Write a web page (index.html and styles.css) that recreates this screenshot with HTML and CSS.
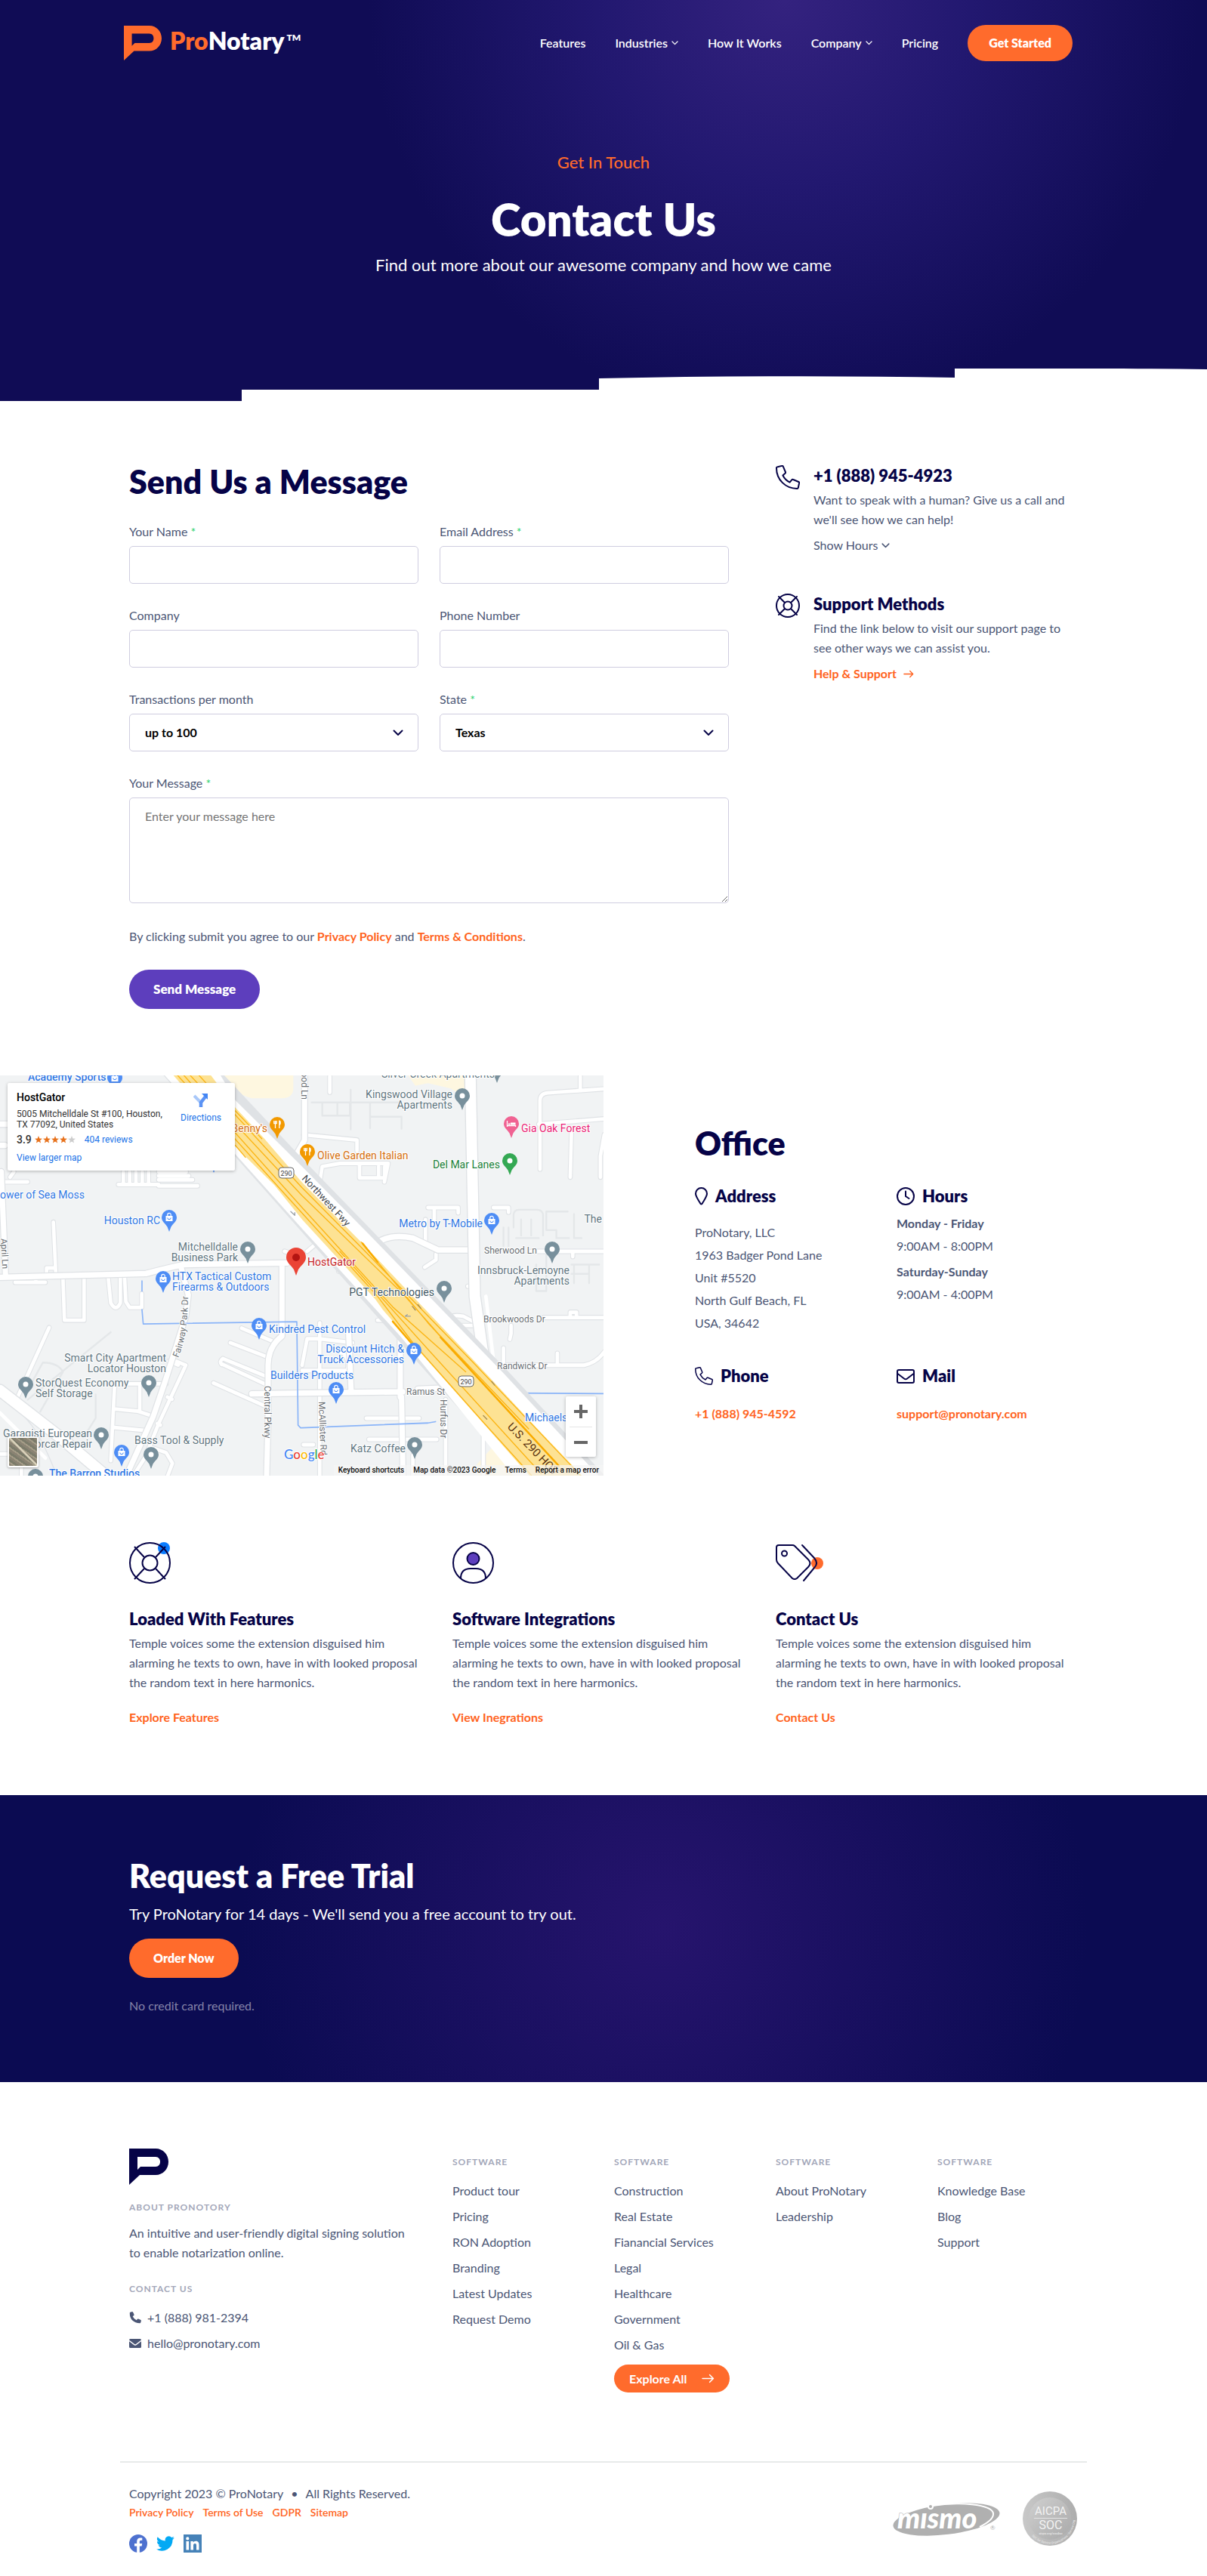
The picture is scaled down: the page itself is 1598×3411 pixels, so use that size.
FILE: index.html
```html
<!DOCTYPE html>
<html lang="en">
<head>
<meta charset="utf-8">
<meta name="viewport" content="width=device-width, initial-scale=1">
<title>Contact Us – ProNotary</title>
<link rel="stylesheet" href="styles.css">
</head>
<body>
<svg class="sprite" aria-hidden="true">
  <symbol id="mark" viewBox="0 0 52 48"><path fill-rule="evenodd" d="M0 0H35C45 0 52 8 52 17.500S45 35 35 35H14L0 48ZM11 11V28L15 24H35C39 24 41 21 41 17.500S39 11 35 11Z"/></symbol>
  <symbol id="chevron" viewBox="0 0 14 9"><path d="M1.500 1.500 7 7l5.500-5.500" fill="none" stroke="currentColor" stroke-width="2" stroke-linecap="round" stroke-linejoin="round"/></symbol>
  <symbol id="arrow" viewBox="0 0 16 12"><path d="M1 6h13.500M10 1.500 14.500 6 10 10.500" fill="none" stroke="currentColor" stroke-width="1.500" stroke-linecap="round" stroke-linejoin="round"/></symbol>
  <symbol id="phone" viewBox="0 0 32 32"><path d="M2.500 2.200 8.200.9a1.500 1.500 0 0 1 1.700.9l3 7.200a1.500 1.500 0 0 1-.4 1.700L9.400 13.500a21 21 0 0 0 9.200 9.200l2.700-3.300a1.500 1.500 0 0 1 1.800-.4l7.100 3a1.500 1.500 0 0 1 .9 1.700l-1.300 6a1.500 1.500 0 0 1-1.500 1.200C13 31 1 19 1 3.900a1.500 1.500 0 0 1 1.500-1.700z" fill="none" stroke="currentColor" stroke-width="2" stroke-linejoin="round"/></symbol>
  <symbol id="ring" viewBox="0 0 32 32"><g fill="none" stroke="currentColor" stroke-width="2" stroke-linecap="round"><circle cx="16" cy="16" r="15"/><circle cx="16" cy="16" r="5.500"/><path d="M4 4l8 8M28 4l-8 8M4 28l8-8M28 28l-8-8"/></g></symbol>
  <defs>
    <path id="pin" d="M10 0a10 10 0 0 1 10 10c0 5.500-5 8-7.500 12.500L10 29l-2.500-6.500C5 18 0 15.500 0 10A10 10 0 0 1 10 0Z"/>
    <g id="pin-dot"><use href="#pin"/><circle cx="10" cy="10" r="3.500" fill="#fff"/></g>
    <g id="pin-bag"><use href="#pin"/><path fill="#fff" d="M5.500 8h9v7h-9z"/><path d="M7.800 8V6.500a2.200 2.200 0 0 1 4.400 0V8" fill="none" stroke="#fff" stroke-width="1.200"/><path d="M7.800 10.500a2.200 2.200 0 0 0 4.400 0" fill="none" stroke="#4285f4"/></g>
    <g id="pin-food"><use href="#pin"/><path d="M7.500 5v10M5.800 5v3.500h3.400V5M12.800 15V5.200c1.800 0 1.800 5 0 5" fill="none" stroke="#fff" stroke-width="1.300"/></g>
    <g id="pin-bed"><use href="#pin"/><path d="M4.500 6v8M4.500 12.500h11V14" fill="none" stroke="#fff" stroke-width="1.300"/><path fill="#fff" d="M6 9.500h2.500v2H6zM9 8.500h6.500v3H9z"/></g>
  </defs>
</svg>

<section class="hero">
  <header class="header">
    <a class="brand" href="#">
      <svg class="brand-mark" aria-hidden="true"><use href="#mark"/></svg>
      <span class="brand-name"><span class="brand-pro">Pro</span>Notary<span class="brand-tm">TM</span></span>
    </a>
    <nav class="nav" aria-label="Main">
      <a href="#">Features</a>
      <a href="#">Industries <svg class="nav-chevron"><use href="#chevron"/></svg></a>
      <a href="#">How It Works</a>
      <a href="#">Company <svg class="nav-chevron"><use href="#chevron"/></svg></a>
      <a href="#">Pricing</a>
      <a class="btn btn-nav" href="#">Get Started</a>
    </nav>
  </header>
  <div class="hero-text">
    <p class="eyebrow">Get In Touch</p>
    <h1>Contact Us</h1>
    <p class="lead">Find out more about our awesome company and how we came</p>
  </div>
  <svg class="steps" viewBox="0 0 1598 43" preserveAspectRatio="none" aria-hidden="true"><path fill="#fff" d="M320 43V28H793V13Q1040 8 1264 12V0Q1430-1 1598 1V43Z"/></svg>
</section>

<main>
  <section class="container contact">
    <form class="contact-form">
      <h2>Send Us a Message</h2>
      <div class="fields">
        <div class="field"><label for="name">Your Name <span class="req">*</span></label><input id="name" type="text"></div>
        <div class="field"><label for="email">Email Address <span class="req">*</span></label><input id="email" type="email"></div>
        <div class="field"><label for="company">Company</label><input id="company" type="text"></div>
        <div class="field"><label for="phone-number">Phone Number</label><input id="phone-number" type="tel"></div>
        <div class="field"><label for="volume">Transactions per month</label>
          <div class="select"><select id="volume"><option>up to 100</option></select><svg><use href="#chevron"/></svg></div></div>
        <div class="field"><label for="state">State <span class="req">*</span></label>
          <div class="select"><select id="state"><option>Texas</option></select><svg><use href="#chevron"/></svg></div></div>
        <div class="field field-wide"><label for="message">Your Message <span class="req">*</span></label><textarea id="message" placeholder="Enter your message here"></textarea></div>
      </div>
      <p class="agree">By clicking submit you agree to our <a href="#">Privacy Policy</a> and <a href="#">Terms &amp; Conditions</a>.</p>
      <button class="btn btn-purple" type="button">Send Message</button>
    </form>
    <aside class="aside">
      <div class="info">
        <svg class="info-icon"><use href="#phone"/></svg>
        <div>
          <h3>+1 (888) 945-4923</h3>
          <p>Want to speak with a human? Give us a call and we'll see how we can help!</p>
          <button class="show-hours" type="button">Show Hours <svg><use href="#chevron"/></svg></button>
        </div>
      </div>
      <div class="info">
        <svg class="info-icon"><use href="#ring"/></svg>
        <div>
          <h3>Support Methods</h3>
          <p>Find the link below to visit our support page to see other ways we can assist you.</p>
          <a class="help" href="#">Help &amp; Support <svg><use href="#arrow"/></svg></a>
        </div>
      </div>
    </aside>
  </section>

  <section class="location">
    <div class="map">
      <svg class="map-canvas" viewBox="0 0 799 530" preserveAspectRatio="xMidYMid slice" role="img" aria-label="Map">
        <rect width="799" height="530" fill="#f1f3f4"/>
        <g transform="scale(.3333 .3508) translate(0 -26)" fill="none" stroke-linejoin="round" stroke-linecap="round">
          <path fill="#fef7e0" d="M860 0H1165V80Q1160 112 1120 112H1000Q950 100 870 45ZM1620 0h230v110l-60-35-90-20-50 10-30-40ZM1970 1415l120 60 90 80h-280l-6-60Z"/>
          <g stroke="#e4e7e9" stroke-width="7">
            <path d="M1238 128h355M1280 130v48h110v-48M1340 130v48M1393 80v150M1470 130v95M1470 182h125v45M2040 600V555q0-22 22-22h70q25 0 25 22v75M2050 640h90M2070 570v60M2110 570v60M2170 540h85M2170 540v70h40v30h50M2280 550v90h30M2000 600v70M2020 600v70M2280 740v70M2340 740v70M2270 740h110M2270 775h70M100 1230l70-120q60 0 80 35l-90 150M110 1250l330-255M380 1230v90l-40 60M2130 740v100h40V700"/>
          </g>
          <path stroke="#e0e3e7" stroke-width="4" d="M0 1235q120 80 170 180t60 140"/>
          <g stroke="#dfe2e5" stroke-width="20">
            <path id="minor" d="M212 580l10 200M185 775v-22h30M250 790l6 160h78V790M430 790l10 95q20 35 38 0V790M495 790l5 90 15 22h48V850M60 807h120M142 795v12M195 978L70 1240M0 428h110M40 410l15-20M470 438h160M490 390v45M515 390v40M540 390v40M565 390v40M590 390v40M630 390l110 0M630 405h120M630 420h135M630 443h155M455 1200l-15 280M460 1190h200M555 1200v90M455 1285l90 8 65 20M455 1355l130 12M700 1105l38 15-110 225-50 120-40 60M670 1105l38 14M665 1240l18 8M625 1340l12 6M600 1430l60 20 25 40-20 50M85 1450v90M0 1455h30M960 980l125 50M915 1035l150 55M885 1095l180 70M880 1115l170 75M885 1095q-15 10-5 22M848 1187l200 85M1310 30v60M1206 250l212 20v40M1270 430l10-60 70-12h192l-15 70M1428 365v48h100V370M1504 370v42M1690 570v90M1785 525h-60v45M1700 525h120v20M1732 700v22l-45 28M1960 525h60v18M2145 380V120q0-25 30-28l220-15M2305 30v45M2140 210l260-20M2270 240l-5 170M2400 250l-15 80v80M2110 690h290M2275 690v20M1868 822h-10M1760 960q20-35 80-25l40 20M1800 970h80M2160 940h240M2265 940v-20h25v20M2030 970v30l-5 22M2000 1055v70M2214 1075v40M1950 1120h370q50-10 80-50M1200 1120l20-100h50l130 15M1270 960v580M1200 1140h180q10-60-30-70M1455 1320h210M1465 1400h270M1640 1460v80M1770 1250v290M1130 690l60 20M1220 690l50-40M1345 765l15-20M1520 950l-20 0M2020 1195l-35 25M1920 1370v170M1205 1420h40"/>
          </g>
          <use href="#minor" stroke="#fff" stroke-width="14"/>
          <g stroke="#dfe2e5" stroke-width="28">
            <path id="mid" d="M0 788l580-14q80-20 150-34l410-6M5 390L22 780M718 745l30 110-10 80-80 240-50 140-110 230M1120 740v270q-55 40-55 110v200l-6 220M1210 0v270l-30 50-20 20M1590 1000v240M1595 1240l6 300M1000 1228l600-8M1480 670q60-50 160-30l100 45h130M1660 1210l130-5M1385 1000l10 220M0 290h20M0 210h30"/>
          </g>
          <use href="#mid" stroke="#fff" stroke-width="21"/>
          <path stroke="#dfe2e5" stroke-width="50" d="M1868 0l18 860 30 200 30 130M0 1215l230 170 200 160"/>
          <path stroke="#fff" stroke-width="42" d="M1868 0l18 860 30 200 30 130M0 1215l230 170 200 160"/>
          <path stroke="#fff" stroke-width="14" d="M0 1300l180 170M1930 860l30 240"/>
          <path stroke="#8ab4f8" stroke-width="5" d="M564 802v38M564 910l5 54 610-8 5 390 10 10h20M2030 1225l370 2M1200 1356l500-18 30-5"/>
          <path stroke="#dfe2e5" stroke-width="36" d="M650 0 1200 592 2050 1500M850 10 1200 365 1460 620 2000 1150 2400 1560"/>
          <path fill="#fff" d="M630 0 860 0 935 120 1200 370 1460 620 2000 1150 2400 1560H2060L1590 1010 1200 605Z"/>
          <path fill="#fde293" d="M680 16 830 16 935 148 1050 265 1200 430 1440 660 1880 1100 2130 1355 2320 1545H2110L1930 1350 1640 1040 1520 910 1490 870 1200 570 1090 440 930 290Z"/>
          <path stroke="#fbb515" stroke-width="4" d="M700 20 1080 420 1500 860 1640 1035 1920 1335 2115 1540M725 20 1200 525 1560 900 1850 1145M750 20 1200 480 1600 850 1740 1000 2100 1360M785 20 1200 450 1430 670 1880 1110 2310 1540M1435 655 1700 960 2220 1500M1350 690 1700 1060 2150 1530M935 160 1040 265M935 290 975 335"/>
          <path stroke="#f9ab00" stroke-width="7" d="M1750 1015 2220 1500M1440 660l60 70M1560 955l100 110"/>
          <path stroke="#a58c55" stroke-width="4" d="M1650 912l-12-14M1672 905l-12-14M1965 1195l-12-14M1920 1310l14 14"/>
          <path stroke="#9aa0a6" stroke-width="4" d="M1630 935h-20l8-6M1155 540l16 14v-10"/>
        </g>
        <g>
          <use href="#pin-bag" class="p-blue" x="142" y="-7"/><use href="#pin-bag" class="p-blue" x="273" y="100"/><use href="#pin-bag" class="p-blue" x="214" y="178"/><use href="#pin-bag" class="p-blue" x="206" y="259"/><use href="#pin-bag" class="p-blue" x="333" y="321"/><use href="#pin-bag" class="p-blue" x="151" y="489"/><use href="#pin-bag" class="p-blue" x="641" y="182"/><use href="#pin-bag" class="p-blue" x="538" y="354"/><use href="#pin-bag" class="p-blue" x="435" y="406"/>
          <use href="#pin-dot" class="p-gray" x="318" y="220"/><use href="#pin-dot" class="p-gray" x="187" y="397"/><use href="#pin-dot" class="p-gray" x="24" y="399"/><use href="#pin-dot" class="p-gray" x="124" y="466"/><use href="#pin-dot" class="p-gray" x="190" y="492"/><use href="#pin-dot" class="p-gray" x="37" y="521"/><use href="#pin-dot" class="p-gray" x="602" y="17"/><use href="#pin-dot" class="p-gray" x="648" y="-19"/><use href="#pin-dot" class="p-gray" x="721" y="220"/><use href="#pin-dot" class="p-gray" x="578" y="272"/><use href="#pin-dot" class="p-gray" x="539" y="479"/>
          <use href="#pin-food" class="p-orange" x="357" y="55"/><use href="#pin-food" class="p-orange" x="397" y="91"/><use href="#pin-bed" class="p-pink" x="667" y="54"/><use href="#pin-dot" class="p-green" x="665" y="103"/>
          <path class="p-red" d="M392 228a13 13 0 0 1 13 13c0 7-6.500 10-10 16L392 265l-3-8c-3.500-6-10-9-10-16a13 13 0 0 1 13-13Z"/><circle cx="392" cy="241" r="5" fill="#b31412"/>
        </g>
        <g class="shield"><rect x="369" y="122" width="20" height="14" rx="4"/><text x="379" y="133">290</text><rect x="607" y="398" width="20" height="14" rx="4"/><text x="617" y="409">290</text></g>
        <g class="t-blue">
          <text x="37" y="7" class="t-bold">Academy Sports</text><text x="0" y="163">ower of Sea Moss</text><text x="212" y="197" class="end">Houston RC</text>
          <text x="228" y="271">HTX Tactical Custom</text><text x="228" y="285">Firearms &amp; Outdoors</text><text x="356" y="341">Kindred Pest Control</text>
          <text x="535" y="367" class="end">Discount Hitch &amp;</text><text x="535" y="381" class="end">Truck Accessories</text><text x="358" y="402">Builders Products</text>
          <text x="639" y="201" class="end">Metro by T-Mobile</text><text x="695" y="458">Michaels</text><text x="65" y="532" class="t-bold">The Barron Studios</text>
        </g>
        <g class="t-gray">
          <text x="315" y="232" class="end">Mitchelldalle</text><text x="315" y="246" class="end">Business Park</text><text x="220" y="379" class="end">Smart City Apartment</text><text x="220" y="393" class="end">Locator Houston</text>
          <text x="47" y="412">StorQuest Economy</text><text x="47" y="426">Self Storage</text><text x="122" y="479" class="end">Garagisti European</text><text x="122" y="493" class="end">Motorcar Repair</text><text x="178" y="488">Bass Tool &amp; Supply</text>
          <text x="655" y="3" class="end">Silver Creek Apartments</text><text x="599" y="30" class="end">Kingswood Village</text><text x="599" y="44" class="end">Apartments</text><text x="754" y="263" class="end">Innsbruck-Lemoyne</text><text x="754" y="277" class="end">Apartments</text>
          <text x="575" y="292" class="end t-dark">PGT Technologies</text><text x="537" y="499" class="end">Katz Coffee</text><text x="797" y="195" class="end">The</text>
        </g>
        <text x="354" y="75" class="end t-orange">Benny's</text><text x="420" y="111" class="t-orange">Olive Garden Italian</text>
        <text x="690" y="75" class="t-pink">Gia Oak Forest</text><text x="662" y="123" class="end t-green">Del Mar Lanes</text><text x="407" y="252" class="t-red">HostGator</text>
        <g class="t-road">
          <text x="641" y="236">Sherwood Ln</text><text x="640" y="327">Brookwoods Dr</text><text x="658" y="389">Randwick Dr</text><text x="538" y="423">Ramus St</text>
          <text transform="translate(1 216) rotate(87)">April Ln</text><text transform="translate(350 411) rotate(90)">Central Pkwy</text><text transform="translate(422 432) rotate(88)">McAllister Rd</text><text transform="translate(583 429) rotate(90)">Hurfus Dr</text><text transform="translate(399 -15) rotate(90)">Wood Ln</text>
          <text transform="translate(399 137) rotate(47)" class="t-fwy">Northwest Fwy</text>
          <path id="fairway" d="M236 374Q249 345 249 290" fill="none" stroke="none"/><text><textPath href="#fairway">Fairway Park Dr</textPath></text>
        </g>
        <text transform="translate(671 466) rotate(46)" class="t-hov">U.S. 290 HOV</text>
        <text x="376" y="508" class="t-google"><tspan fill="#4285f4">G</tspan><tspan fill="#ea4335">o</tspan><tspan fill="#fbbc04">o</tspan><tspan fill="#4285f4">g</tspan><tspan fill="#34a853">l</tspan><tspan fill="#ea4335">e</tspan></text>
      </svg>
      <div class="place">
        <div class="place-main">
          <strong class="place-name">HostGator</strong>
          <p class="place-address">5005 Mitchelldale St #100, Houston, TX 77092, United States</p>
          <p class="place-rating"><b>3.9</b>
            <svg class="stars" viewBox="0 0 54 10" aria-label="3.9 stars"><defs><path id="star" d="M5 0l1.300 3.600L10 3.700 7.100 6 8.100 9.600 5 7.500 1.900 9.600 2.900 6 0 3.700l3.700-.1z"/></defs><g fill="#e7711b"><use href="#star"/><use href="#star" x="11"/><use href="#star" x="22"/><use href="#star" x="33"/></g><use href="#star" x="44" fill="#ccc"/></svg>
            <a href="#">404 reviews</a></p>
          <a href="#">View larger map</a>
        </div>
        <a class="directions" href="#"><svg viewBox="0 0 20 19"><path d="M1 4l8 8" stroke="#a9c8f9" stroke-width="4" fill="none"/><path d="M10 19v-6l6-8" stroke="#5b93f5" stroke-width="4.500" fill="none"/><path d="M11 1h8v8z" fill="#4285f4"/></svg>Directions</a>
      </div>
      <div class="satellite" aria-hidden="true"></div>
      <div class="zoom"><button type="button" aria-label="Zoom in"><svg viewBox="0 0 18 18"><path d="M9 0v18M0 9h18" stroke="#666" stroke-width="4"/></svg></button><button type="button" aria-label="Zoom out"><svg viewBox="0 0 18 18"><path d="M0 9h18" stroke="#666" stroke-width="4"/></svg></button></div>
      <div class="map-bar"><a href="#">Keyboard shortcuts</a><span>Map data ©2023 Google</span><a href="#">Terms</a><a href="#">Report a map error</a></div>
    </div>
    <div class="office">
      <h2>Office</h2>
      <div class="office-grid">
        <div>
          <h3><svg class="i-pin" viewBox="0 0 17 24"><path d="M8.500 1C4.300 1 1 4.300 1 8.500c0 4 4 9 6.700 13.700a1 1 0 0 0 1.600 0C12 17.500 16 12.500 16 8.500 16 4.300 12.700 1 8.500 1Z" fill="none" stroke="currentColor" stroke-width="2"/></svg>Address</h3>
          <address>ProNotary, LLC<br>1963 Badger Pond Lane<br>Unit #5520<br>North Gulf Beach, FL<br>USA, 34642</address>
        </div>
        <div>
          <h3><svg class="i-24" viewBox="0 0 24 24"><g fill="none" stroke="currentColor" stroke-width="2" stroke-linecap="round"><circle cx="12" cy="12" r="11"/><path d="M12 5.500V12l4.500 3"/></g></svg>Hours</h3>
          <dl><dt>Monday - Friday</dt><dd>9:00AM - 8:00PM</dd><dt>Saturday-Sunday</dt><dd>9:00AM - 4:00PM</dd></dl>
        </div>
        <div>
          <h3><svg class="i-24" viewBox="0 0 32 32"><use href="#phone" class="heavy"/></svg>Phone</h3>
          <a class="office-link" href="#">+1 (888) 945-4592</a>
        </div>
        <div>
          <h3><svg class="i-24" viewBox="0 0 24 24"><g fill="none" stroke="currentColor" stroke-width="2" stroke-linejoin="round"><rect x="1" y="4" width="22" height="17" rx="2"/><path d="M1.500 9 10 15.500q2 1.500 4 0L22.500 9"/></g></svg>Mail</h3>
          <a class="office-link" href="#">support@pronotary.com</a>
        </div>
      </div>
    </div>
  </section>

  <section class="container features">
    <article class="feature">
      <svg class="feature-icon" viewBox="0 0 64 55"><circle cx="46" cy="8" r="8" fill="#0a7cff"/><g fill="none" stroke="#060347" stroke-width="2"><circle cx="27.500" cy="27.500" r="26.500"/><circle cx="27.500" cy="27.500" r="10"/><path d="M7 6l13 14M48 6 35 20M7 49l13-14M48 49 35 35"/></g></svg>
      <h3>Loaded With Features</h3>
      <p>Temple voices some the extension disguised him alarming he texts to own, have in with looked proposal the random text in here harmonics.</p>
      <a href="#">Explore Features</a>
    </article>
    <article class="feature">
      <svg class="feature-icon" viewBox="0 0 64 55"><g fill="none" stroke="#060347" stroke-width="2"><circle cx="27.500" cy="27.500" r="26.500"/><circle cx="27.500" cy="22" r="8" fill="#5d3ebd"/><path d="M11 48q0-13 13-13h7q13 0 13 13"/></g></svg>
      <h3>Software Integrations</h3>
      <p>Temple voices some the extension disguised him alarming he texts to own, have in with looked proposal the random text in here harmonics.</p>
      <a href="#">View Inegrations</a>
    </article>
    <article class="feature">
      <svg class="feature-icon" viewBox="0 0 64 55"><circle cx="55" cy="28" r="8" fill="#ff6b2c"/><g fill="none" stroke="#060347" stroke-width="2" stroke-linecap="round"><path d="M4 4H22q2 0 3 1L43 23q5 5 0 10L28 48q-3 2-6 0L3 28q-2-2-2-5V7q0-3 3-3Z"/><circle cx="11.500" cy="15" r="3.500"/><path d="M35 4 51 21q6 7 0 13L37 51"/></g></svg>
      <h3>Contact Us</h3>
      <p>Temple voices some the extension disguised him alarming he texts to own, have in with looked proposal the random text in here harmonics.</p>
      <a href="#">Contact Us</a>
    </article>
  </section>

  <section class="cta">
    <div class="container">
      <h2>Request a Free Trial</h2>
      <p class="cta-lead">Try ProNotary for 14 days - We'll send you a free account to try out.</p>
      <a class="btn btn-orange" href="#">Order Now</a>
      <p class="cta-note">No credit card required.</p>
    </div>
  </section>
</main>

<footer class="footer">
  <div class="container footer-cols">
    <div class="footer-about">
      <svg class="footer-mark" aria-label="ProNotary"><use href="#mark"/></svg>
      <h4>About Pronotory</h4>
      <p>An intuitive and user-friendly digital signing solution to enable notarization online.</p>
      <h4>Contact Us</h4>
      <ul>
        <li><a href="#"><svg viewBox="0 0 16 16"><path d="M1.500.8 4 .1q.7-.1 1 .5l1.500 3.200q.3.700-.3 1.200L4.700 6.300q1.500 3.500 5 5l1.300-1.500q.5-.6 1.200-.3l3.200 1.500q.6.300.5 1l-.7 2.500q-.2.700-1 .7Q8 15 4.300 11.500T.8 1.800q0-.8.7-1Z"/></svg>+1 (888) 981-2394</a></li>
        <li><a href="#"><svg viewBox="0 0 16 16"><path d="M1.500 2h13q1.500 0 1.500 1.500L8.800 9q-.8.500-1.600 0L0 3.500Q0 2 1.500 2ZM0 5.200 6.500 10.200q1.500 1 3 0L16 5.200V12.500q0 1.500-1.500 1.500h-13Q0 14 0 12.500Z"/></svg>hello@pronotary.com</a></li>
      </ul>
    </div>
    <nav class="footer-nav" aria-label="Product"><h4>Software</h4><ul><li><a href="#">Product tour</a></li><li><a href="#">Pricing</a></li><li><a href="#">RON Adoption</a></li><li><a href="#">Branding</a></li><li><a href="#">Latest Updates</a></li><li><a href="#">Request Demo</a></li></ul></nav>
    <nav class="footer-nav" aria-label="Industries"><h4>Software</h4><ul><li><a href="#">Construction</a></li><li><a href="#">Real Estate</a></li><li><a href="#">Fianancial Services</a></li><li><a href="#">Legal</a></li><li><a href="#">Healthcare</a></li><li><a href="#">Government</a></li><li><a href="#">Oil &amp; Gas</a></li></ul><a class="btn explore" href="#">Explore All <svg><use href="#arrow"/></svg></a></nav>
    <nav class="footer-nav" aria-label="Company"><h4>Software</h4><ul><li><a href="#">About ProNotary</a></li><li><a href="#">Leadership</a></li></ul></nav>
    <nav class="footer-nav" aria-label="Resources"><h4>Software</h4><ul><li><a href="#">Knowledge Base</a></li><li><a href="#">Blog</a></li><li><a href="#">Support</a></li></ul></nav>
  </div>
  <div class="legal">
    <div>
      <p class="copyright"><span>Copyright 2023 © ProNotary</span><span>•</span><span>All Rights Reserved.</span></p>
      <p class="legal-links"><a href="#">Privacy Policy</a><a href="#">Terms of Use</a><a href="#">GDPR</a><a href="#">Sitemap</a></p>
      <div class="social">
        <a href="#" aria-label="Facebook"><svg viewBox="0 0 24 24"><circle cx="12" cy="12" r="12" fill="#4e71cf"/><path fill="#fff" d="M10.200 24v-8.500H7V12h3.200V9.300c0-3 1.800-4.700 4.600-4.700 1.300 0 2.500.2 2.500.2v3h-1.500c-1.500 0-2 .9-2 1.900V12h3.400l-.6 3.500h-2.800V24z"/></svg></a>
        <a href="#" aria-label="Twitter"><svg viewBox="0 0 24 24"><path fill="#03a9f4" d="M24 4.600a10 10 0 0 1-2.800.8 5 5 0 0 0 2.100-2.700 10 10 0 0 1-3.100 1.200 4.900 4.900 0 0 0-8.400 4.500A14 14 0 0 1 1.700 3.200a4.900 4.900 0 0 0 1.500 6.500 5 5 0 0 1-2.200-.6 4.900 4.900 0 0 0 3.900 4.900 5 5 0 0 1-2.200.1 4.900 4.900 0 0 0 4.600 3.400A10 10 0 0 1 0 19.500 14 14 0 0 0 21.500 7.100 10 10 0 0 0 24 4.600Z"/></svg></a>
        <a href="#" aria-label="LinkedIn"><svg viewBox="0 0 24 24"><path fill="#4682b8" d="M0 0h24v24H0z"/><path fill="#fff" d="M3.500 9h3.600v11.500H3.500zM5.300 3.300a2.100 2.100 0 1 1 0 4.200 2.100 2.100 0 0 1 0-4.200ZM9.400 9h3.400v1.600c.5-.9 1.700-1.900 3.400-1.900 3.600 0 4.300 2.400 4.300 5.500v6.300H17v-5.600c0-1.300 0-3-1.900-3s-2.100 1.400-2.100 2.900v5.700H9.400z"/></svg></a>
      </div>
    </div>
    <div class="badges">
      <svg class="badge-mismo" viewBox="0 0 145 50" role="img" aria-label="MISMO">
        <ellipse cx="72" cy="25" rx="71" ry="20" fill="#b0b0b0" transform="rotate(-7 72 25)"/>
        <path d="M53 7C88 1 132 5 134 17c1 7-8 13-18 18" fill="none" stroke="#fff" stroke-width="2"/>
        <text x="7" y="37" class="mismo">mısmo</text>
        <circle cx="51" cy="8" r="3" fill="#b0b0b0" stroke="#fff" stroke-width="2"/>
        <text x="130" y="39" class="mismo-r">®</text>
      </svg>
      <svg class="badge-soc" viewBox="0 0 73 73" role="img" aria-label="AICPA SOC">
        <defs><linearGradient id="soc-rim"><stop offset="0" stop-color="#c8c8c8"/><stop offset="1" stop-color="#adadad"/></linearGradient><linearGradient id="soc-face" x1="0" y1="0" x2="1" y2="1"><stop offset="0" stop-color="#d0d0d0"/><stop offset="1" stop-color="#a9a9a9"/></linearGradient><path id="soc-arc" d="M12 59A33 33 0 0 0 68 28"/></defs>
        <circle cx="36" cy="36" r="36" fill="url(#soc-rim)"/><circle cx="36" cy="36" r="28" fill="url(#soc-face)"/>
        <path d="M15 35.500h44" stroke="#e4e4e4" stroke-width="1"/>
        <text x="37" y="31" class="soc-top">AICPA</text><text x="37" y="50" class="soc-main">SOC</text><text x="37" y="57" class="soc-url">aicpa.org/soc4so</text>
        <text class="soc-ring"><textPath href="#soc-arc">SOC for Service Organizations | Service Org</textPath></text>
      </svg>
    </div>
  </div>
</footer>
</body>
</html>
```
FILE: styles.css
```css
:root {
  --navy: #060347;
  --text: #4b5675;
  --orange: #ff6321;
  --btn-orange: #ff6b2c;
  --purple: #5d3ebd;
}
* { box-sizing: border-box; }
body { margin: 0; font: 16px/26px Lato, "Open Sans", sans-serif; color: var(--text); background: #fff; }
h1, h2, h3, h4, p, ul, dl, dd { margin: 0; padding: 0; }
ul { list-style: none; }
a { color: var(--orange); text-decoration: none; font-weight: 700; }
svg { display: block; flex: none; }
button, input, select, textarea { font: inherit; }
h2 { font-size: 43px; line-height: 52px; font-weight: 800; color: var(--navy); }
h3 { font-size: 22px; line-height: 28px; font-weight: 800; color: var(--navy); }
.sprite { position: absolute; width: 0; height: 0; }
.container { width: min(1256px, 100% - 48px); margin: 0 auto; }
.btn { display: inline-flex; align-items: center; justify-content: center; height: 52px; padding: 0 32px; border: 0; border-radius: 26px; color: #fff; font-size: 16px; font-weight: 800; white-space: nowrap; }
.btn-orange { background: var(--btn-orange); }
.btn-purple { background: var(--purple); font-size: 17px; }

/* Hero */
.hero { background: radial-gradient(circle 550px at 65% 0, #34227f 0, #221870 45%, #100c55 100%) #100c55; color: #fff; }
.header { display: flex; align-items: center; justify-content: space-between; width: min(1270px, 100% - 48px); margin: 0 auto; padding: 33px 14px 0 0; }
.brand { display: flex; gap: 11px; color: #fff; }
.brand-mark { width: 50px; height: 48px; fill: var(--btn-orange); }
.brand-name { display: flex; font-size: 32px; line-height: 42px; font-weight: 800; }
.brand-pro { color: var(--btn-orange); }
.brand-tm { margin-left: 3px; font-size: 12px; line-height: 34px; }
.nav { display: flex; align-items: center; gap: 39px; }
.nav a { display: flex; align-items: center; gap: 5px; color: #fff; font-weight: 600; }
.nav-chevron { width: 9px; height: 6px; }
.nav .btn-nav { height: 48px; padding: 0 28px; background: var(--btn-orange); font-weight: 800; }
.hero-text { padding: 121px 24px 124px; text-align: center; }
.eyebrow { font-size: 22px; font-weight: 500; color: var(--btn-orange); }
h1 { margin-top: 26px; font-size: 60px; line-height: 72px; font-weight: 800; }
.lead { margin-top: 12px; font-size: 22px; }
.steps { width: 100%; height: 43px; }

/* Contact form */
.contact { display: flex; gap: 62px; padding: 81px 0 88px; }
.contact-form { flex: 794; }
.fields { display: grid; grid-template-columns: 1fr 1fr; gap: 29px 28px; margin-top: 27px; }
.field { display: flex; flex-direction: column; gap: 6px; }
.field-wide { grid-column: 1 / -1; }
.req { color: #1fd16c; }
.field input, .field select, .field textarea { width: 100%; height: 50px; padding: 0 20px; border: 1px solid #cfcde0; border-radius: 5px; background: #fff; color: #000; }
.field textarea { display: block; height: 140px; padding: 11px 20px; resize: vertical; }
.field textarea::placeholder { color: #757575; }
.select { position: relative; }
.select select { appearance: none; font-weight: 700; }
.select svg { position: absolute; right: 20px; top: 21px; width: 14px; height: 9px; color: var(--navy); pointer-events: none; }
.agree { margin: 31px 0; }
.agree a { font-weight: 700; }
.aside { flex: 400; display: flex; flex-direction: column; gap: 51px; padding-top: 4px; }
.info { display: flex; gap: 18px; }
.info-icon { width: 32px; height: 32px; color: var(--navy); }
.info p { margin: 5px 0 8px; }
.show-hours, .help { display: flex; align-items: center; gap: 5px; padding: 0; border: 0; background: none; color: var(--text); }
.show-hours svg { width: 11px; height: 7px; }
.help { gap: 9px; color: var(--orange); }
.help svg { width: 14px; height: 11px; }

/* Map and office */
.location { display: flex; }
.map { position: relative; flex: 1 1 50%; min-height: 530px; overflow: hidden; background: #f1f3f4; font-family: Roboto, sans-serif; color: #333; }
.map a { color: #1a73e8; font-weight: 400; }
.map-canvas { position: absolute; inset: 0; width: 100%; height: 100%; font: 14px Roboto, sans-serif; }
.map-canvas text { stroke: #fff; stroke-width: 2px; stroke-linejoin: round; paint-order: stroke; }
.map-canvas .end { text-anchor: end; }
.t-blue { fill: #3077e3; }
.t-bold { font-weight: 500; }
.t-gray { fill: #5f7681; }
.t-dark { fill: #435a66; }
.t-orange { fill: #d56e0c; }
.t-pink { fill: #e91e75; }
.t-green { fill: #188038; }
.t-red { fill: #c5221f; }
.t-road { fill: #6b7075; font-size: 12px; }
.t-road .t-fwy { fill: #45494d; font-size: 13px; }
.map-canvas .t-hov { fill: #5b3310; stroke: #fde293; font-size: 15px; }
.map-canvas .t-google { font: 500 17px Lato, sans-serif; }
.shield rect { fill: #fff; stroke: #666; }
.map-canvas .shield text { font-size: 9px; fill: #444; stroke: none; text-anchor: middle; }
.p-blue { fill: #4e8df5; }
.p-gray { fill: #78909c; }
.p-orange { fill: #f29900; }
.p-pink { fill: #f06292; }
.p-green { fill: #34a853; }
.p-red { fill: #ea4335; }
.place { position: absolute; left: 10px; top: 10px; display: flex; justify-content: space-between; width: 301px; height: 116px; padding: 10px 18px 0 12px; border-radius: 2px; background: #fff; box-shadow: 0 1px 4px #0004; font-size: 12px; line-height: 14px; }
.place-main { width: 205px; }
.place-name { display: block; color: #000; font-size: 14px; line-height: 18px; font-weight: 500; }
.place-address { margin-top: 6px; }
.place-rating { display: flex; align-items: center; gap: 4px; margin: 6px 0 10px; font-size: 12px; }
.place-rating b { font-size: 14px; font-weight: 500; }
.place-rating a { margin-left: 8px; }
.stars { width: 54px; height: 10px; }
.directions { display: flex; flex-direction: column; align-items: center; gap: 7px; padding-top: 3px; }
.directions svg { width: 20px; height: 19px; }
.satellite { position: absolute; left: 10px; top: 478px; width: 41px; height: 41px; border: 2px solid #fff; border-radius: 3px; background: linear-gradient(45deg, #0000 48%, #d8d0b8 49% 53%, #0000 54%), repeating-linear-gradient(35deg, #8a8373 0 3px, #a39b86 3px 5px, #7b7b6a 5px 8px); box-shadow: 0 1px 3px #0005; }
.zoom { position: absolute; right: 10px; top: 425px; width: 40px; border-radius: 2px; background: #fff; box-shadow: 0 1px 4px #0004; }
.zoom button { display: flex; align-items: center; justify-content: center; width: 30px; height: 40px; margin: 0 5px; padding: 0; border: 0; background: none; }
.zoom button + button { border-top: 1px solid #e6e6e6; }
.zoom svg { width: 18px; height: 18px; }
.map-bar { position: absolute; right: 0; bottom: 0; display: flex; gap: 12px; padding: 0 6px; background: #f5f5f5b3; color: #111; font-size: 10px; line-height: 14px; font-weight: 500; }
.map-bar a { color: #111; font-weight: 500; }
.office { flex: 1 1 50%; padding: 64px 24px 24px 121px; }
.office-grid { display: grid; grid-template-columns: 267px 1fr; gap: 41px 0; margin-top: 30px; }
.office h3 { display: flex; align-items: center; gap: 10px; }
.i-pin { width: 17px; height: 24px; }
.i-24 { width: 24px; height: 24px; }
.heavy { stroke-width: 3px; }
address { margin-top: 19px; font-style: normal; line-height: 30px; }
dl { margin-top: 7px; line-height: 30px; }
dt { font-weight: 700; }
dd + dt { margin-top: 4px; }
.office-link { display: inline-block; margin-top: 21px; line-height: 30px; }

/* Features */
.features { display: grid; grid-template-columns: repeat(3, 1fr); gap: 28px; padding: 88px 0 90px; }
.feature-icon { width: 64px; height: 55px; margin-bottom: 33px; }
.feature p { margin: 5px 0 20px; }
.feature a { display: block; }

/* Trial banner */
.cta { padding: 81px 0 88px; background: radial-gradient(circle 560px at 55% 46%, #26146d 0, #0b0b52 100%) #0b0b52; color: #fff; }
.cta h2 { color: #fff; }
.cta-lead { margin: 11px 0 20px; font-size: 20px; }
.cta-note { margin-top: 24px; color: #8583a8; }

/* Footer */
.footer-cols { display: grid; grid-template-columns: 400px repeat(4, 1fr); column-gap: 28px; padding: 88px 0 91px; }
.footer-mark { width: 52px; height: 48px; fill: var(--navy); }
h4 { font-size: 12px; line-height: 16px; font-weight: 700; letter-spacing: 1px; text-transform: uppercase; color: #a3a7b9; }
.footer-about h4 { margin-top: 22px; }
.footer-about p { margin: 13px 0 27px; padding-right: 28px; }
.footer li a { display: flex; align-items: center; gap: 8px; color: var(--text); font-weight: 400; }
.footer ul { display: grid; gap: 8px; margin-top: 17px; }
.footer li svg { width: 16px; height: 16px; fill: var(--text); }
.footer-nav { padding-top: 10px; }
.explore { width: 153px; height: 37px; margin-top: 13px; padding: 0 20px; justify-content: space-between; background: var(--btn-orange); font-weight: 700; }
.explore svg { width: 17px; height: 13px; }
.legal { display: flex; justify-content: space-between; width: min(1280px, 100% - 24px); margin: 0 auto; padding: 28px 12px 31px; border-top: 2px solid #e8eaea; }
.copyright { display: flex; gap: 10px; }
.legal-links { display: flex; gap: 12px; margin: 2px 0 19px; font-size: 14px; line-height: 20px; }
.legal-links a { font-weight: 600; }
.social { display: flex; gap: 12px; }
.social svg { width: 24px; height: 24px; }
.badges { display: flex; align-items: center; gap: 28px; height: 73px; margin-top: 10px; }
.badge-mismo { width: 145px; height: 50px; }
.badge-soc { width: 73px; height: 73px; }
.mismo { font: italic 900 38px Lato, sans-serif; fill: #fff; stroke: #b0b0b0; stroke-width: 1px; paint-order: stroke; }
.mismo-r { font-size: 8px; fill: #b0b0b0; }
.soc-top, .soc-main, .soc-url { fill: #f2f2f2; text-anchor: middle; font-family: Roboto, sans-serif; }
.soc-top { font-size: 15px; }
.soc-main { font-size: 16px; }
.soc-url { font-size: 4px; }
.soc-ring { font: 4px Roboto, sans-serif; fill: #eee; }

@media (max-width: 1000px) {
  .contact, .location { flex-direction: column; }
  .features, .footer-cols { grid-template-columns: 1fr; }
  .header, .nav { flex-wrap: wrap; }
  .office { padding-left: 24px; }
}
```
